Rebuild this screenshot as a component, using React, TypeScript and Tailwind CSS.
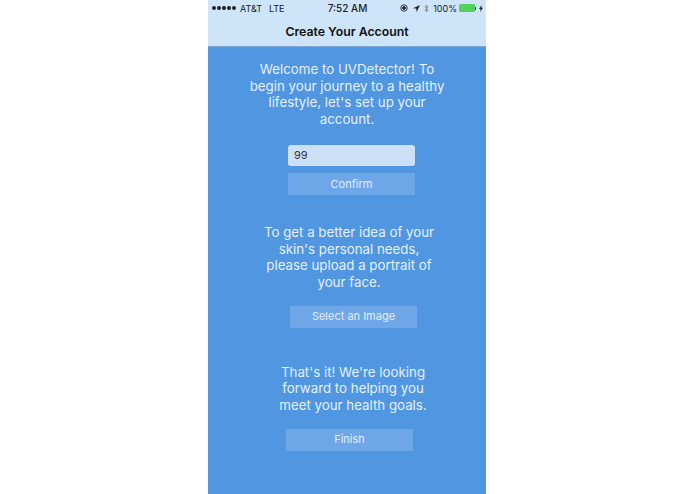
const FONT = "font-['Inter','Noto_Sans',sans-serif]";

function StatusBar() {
  return (
    <div className="flex h-[16px] items-center justify-between pl-[4px] pr-[3px] text-[9px] leading-none text-[#222]">
      <div className="flex w-[100px] items-center">
        <div className="flex gap-[1px]">
          {[0, 1, 2, 3, 4].map((i) => (
            <span key={i} className="h-[4px] w-[4px] rounded-full bg-[#222]" />
          ))}
        </div>
        <span className="ml-[4px]">AT&amp;T</span>
        <span className="ml-[7px]">LTE</span>
      </div>
      <span className="text-[10px] font-medium">7:52 AM</span>
      <div className="flex w-[100px] items-center justify-end">
        <svg width="8" height="8" viewBox="0 0 8 8" fill="none" stroke="#222" strokeWidth="0.9">
          <circle cx="4" cy="4" r="3.2" />
          <circle cx="4" cy="4" r="1.4" fill="#222" />
        </svg>
        <svg className="ml-[5px]" width="7" height="7" viewBox="0 0 7 7" fill="#222">
          <path d="M7 0 L0 3.2 L3.2 3.6 L3.6 7 Z" />
        </svg>
        <svg className="ml-[4px]" width="5" height="9" viewBox="0 0 5 9" fill="none" stroke="#777" strokeWidth="0.7">
          <path d="M0.3 2.2 L4.2 6.2 L2.4 8.2 L2.4 0.8 L4.2 2.8 L0.3 6.8" />
        </svg>
        <span className="ml-[4px]">100%</span>
        <div className="ml-[2px] h-[8px] w-[16px] rounded-[1.5px] bg-[#4fd35a]" />
        <div className="h-[3px] w-[1px] bg-[#444]" />
        <svg className="ml-[3px]" width="4" height="7" viewBox="0 0 4 7" fill="#222">
          <path d="M2.6 0 L0 4 L1.6 4 L1.2 7 L4 2.8 L2.3 2.8 Z" />
        </svg>
      </div>
    </div>
  );
}

function Action({ label, shift }: { label: string; shift: string }) {
  return (
    <button className={`flex h-[22px] w-[127px] items-center justify-center bg-[#6ea6e8] text-[11px] text-[#e3eefa] ${shift}`}>
      {label}
    </button>
  );
}

export default function App() {
  return (
    <div className={`h-[494px] w-[695px] bg-white pl-[208px] ${FONT}`}>
      <div className="flex h-[494px] w-[278px] flex-col bg-[#5096e0]">
        <div className="h-[47px] border-b border-[#7fa9d6] bg-[#cde4f9]">
          <StatusBar />
          <div className="pt-[6px] text-center text-[12.3px] font-semibold leading-[20px] text-[#111]">
            Create Your Account
          </div>
        </div>

        <p className="mt-[14px] text-center text-[13.3px] leading-[16.7px] text-[#e6f1fc]">
          Welcome to UVDetector! To
          <br />
          begin your journey to a healthy
          <br />
          lifestyle, let's set up your
          <br />
          account.
        </p>
        <div className="ml-[80px] mt-[17px] flex h-[21px] w-[127px] items-center rounded-[3px] bg-[#cde0f7] pl-[6px] text-[11px] text-[#333]">
          99
        </div>
        <Action label="Confirm" shift="ml-[80px] mt-[7px]" />

        <p className="mt-[29px] pl-[4px] text-center text-[13.3px] leading-[16.7px] text-[#e6f1fc]">
          To get a better idea of your
          <br />
          skin's personal needs,
          <br />
          please upload a portrait of
          <br />
          your face.
        </p>
        <Action label="Select an Image" shift="ml-[82px] mt-[15px]" />

        <p className="mt-[36px] pl-[12px] text-center text-[13.3px] leading-[16.7px] text-[#e6f1fc]">
          That's it! We're looking
          <br />
          forward to helping you
          <br />
          meet your health goals.
        </p>
        <Action label="Finish" shift="ml-[78px] mt-[15px]" />
      </div>
    </div>
  );
}
